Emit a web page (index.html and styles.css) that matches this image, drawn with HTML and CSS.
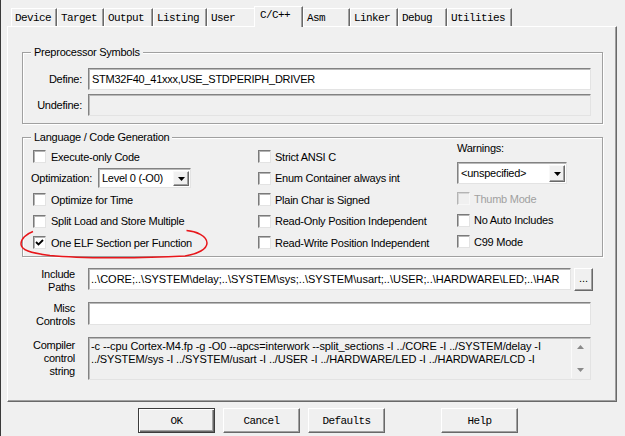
FILE: index.html
```html
<!DOCTYPE html>
<html>
<head>
<meta charset="utf-8">
<link rel="stylesheet" href="styles.css">
</head>
<body>
<div class="window">
  <div class="tabs">
    <div class="tab w-device">Device</div>
    <div class="tab w-target">Target</div>
    <div class="tab w-output">Output</div>
    <div class="tab w-listing">Listing</div>
    <div class="tab w-user">User</div>
    <div class="tab tab--active w-cpp">C/C++</div>
    <div class="tab w-asm">Asm</div>
    <div class="tab w-linker">Linker</div>
    <div class="tab w-debug">Debug</div>
    <div class="tab w-util">Utilities</div>
  </div>
  <div class="panel">
    <div class="group group--pre">
      <span class="legend">Preprocessor Symbols</span>
      <div class="sym-grid">
        <div class="flabel">Define:</div>
        <div class="input">STM32F40_41xxx,USE_STDPERIPH_DRIVER</div>
        <div class="flabel">Undefine:</div>
        <div class="input input--disabled"></div>
      </div>
    </div>
    <div class="group group--lang">
      <span class="legend">Language / Code Generation</span>
      <div class="lang">
        <div class="col col1">
          <div class="row"><span class="cb"></span>Execute-only Code</div>
          <div class="row"><span class="opt-label">Optimization:</span>
            <div class="combo combo--opt"><span class="combo-text">Level 0 (-O0)</span><span class="combo-btn"><svg width="7" height="4" viewBox="0 0 7 4"><path d="M0 0H7L3.5 4Z" fill="#000"/></svg></span></div>
          </div>
          <div class="row"><span class="cb"></span>Optimize for Time</div>
          <div class="row"><span class="cb"></span>Split Load and Store Multiple</div>
          <div class="row"><span class="cb cb--checked"><svg width="11" height="11" viewBox="0 0 11 11"><path d="M2 5L4.5 7.5L9 3" fill="none" stroke="#000" stroke-width="1.8"/></svg></span>One ELF Section per Function</div>
        </div>
        <div class="col col2">
          <div class="row"><span class="cb"></span>Strict ANSI C</div>
          <div class="row"><span class="cb"></span>Enum Container always int</div>
          <div class="row"><span class="cb"></span>Plain Char is Signed</div>
          <div class="row"><span class="cb"></span>Read-Only Position Independent</div>
          <div class="row"><span class="cb"></span>Read-Write Position Independent</div>
        </div>
        <div class="col col3">
          <div class="warn-label">Warnings:</div>
          <div class="combo combo--warn"><span class="combo-text">&lt;unspecified&gt;</span><span class="combo-btn"><svg width="7" height="4" viewBox="0 0 7 4"><path d="M0 0H7L3.5 4Z" fill="#000"/></svg></span></div>
          <div class="col3-rows">
            <div class="row row--disabled"><span class="cb cb--disabled"></span>Thumb Mode</div>
            <div class="row"><span class="cb"></span>No Auto Includes</div>
            <div class="row"><span class="cb"></span>C99 Mode</div>
          </div>
        </div>
      </div>
    </div>
    <div class="opts">
      <div class="opt-row">
        <div class="olabel"><span>Include</span><span>Paths</span></div>
        <div class="field-line">
          <div class="input input--include">..\CORE;..\SYSTEM\delay;..\SYSTEM\sys;..\SYSTEM\usart;..\USER;..\HARDWARE\LED;..\HAR</div>
          <div class="browse">...</div>
        </div>
      </div>
      <div class="opt-row opt-row--misc">
        <div class="olabel"><span>Misc</span><span>Controls</span></div>
        <div class="input input--wide"></div>
      </div>
      <div class="opt-row opt-row--comp">
        <div class="olabel"><span>Compiler</span><span>control</span><span>string</span></div>
        <div class="textarea">
          <div class="ta-text">-c --cpu Cortex-M4.fp -g -O0 --apcs=interwork --split_sections -I ../CORE -I ../SYSTEM/delay -I<br>../SYSTEM/sys -I ../SYSTEM/usart -I ../USER -I ../HARDWARE/LED -I ../HARDWARE/LCD -I</div>
          <div class="scrollbar">
            <svg width="7" height="4" viewBox="0 0 7 4"><path d="M0 4H7L3.5 0Z" fill="#8a8a8a"/></svg>
            <svg width="7" height="4" viewBox="0 0 7 4"><path d="M0 0H7L3.5 4Z" fill="#8a8a8a"/></svg>
          </div>
        </div>
      </div>
    </div>
  </div>
  <div class="buttons">
    <div class="btn btn--default">OK</div>
    <div class="btn">Cancel</div>
    <div class="btn">Defaults</div>
    <div class="btn btn--help">Help</div>
  </div>
  <svg class="annot" width="625" height="436" viewBox="0 0 625 436">
    <path d="M33 231.5 C26 234, 21 239, 21 244 C21 250, 30 253, 50 255.5 C80 258.5, 140 258.5, 185 256 C198 254, 207 249, 207 243 C207 236, 196 231, 186.5 230.5" fill="none" stroke="#e8161b" stroke-width="1.5"/>
  </svg>
</div>
</body>
</html>
```

FILE: styles.css
```css
* { box-sizing: border-box; }
html, body { margin: 0; padding: 0; background: #f0f0f0; }
body {
  font-family: "Liberation Sans", Arial, sans-serif;
  font-size: 11px;
  letter-spacing: -0.25px;
  color: #000;
  overflow: hidden;
}
.window {
  position: relative;
  width: 625px;
  height: 436px;
  border-left: 1px solid #3a3a3a;
}

/* Tabs */
.tabs {
  display: flex;
  align-items: flex-end;
  height: 26px;
  padding-left: 10px;
  font-family: "Liberation Mono", "DejaVu Sans Mono", monospace;
  font-size: 11px;
  letter-spacing: -0.6px;
}
.tab {
  height: 18px;
  border-top: 1px solid #fff;
  border-left: 1px solid #fff;
  border-right: 1px solid #696969;
  box-shadow: inset -1px 0 0 #a0a0a0;
  padding: 2px 0 0 3px;
  line-height: 14px;
  white-space: nowrap;
}
.tab--active {
  height: 21px;
  margin-bottom: -1px;
  position: relative;
  z-index: 1;
  background: #f0f0f0;
  padding: 1px 0 0 5px;
}
.w-device { width: 46px; }
.w-target { width: 47px; }
.w-output { width: 49px; }
.w-listing { width: 54px; }
.w-user { width: 47px; border-right: none; box-shadow: none; }
.w-cpp { width: 49px; }
.w-asm { width: 47px; }
.w-linker { width: 48px; }
.w-debug { width: 49px; }
.w-util { width: 65px; }

/* Panel */
.panel {
  margin-left: 6px;
  width: 610px;
  height: 376px;
  border: 1px solid;
  border-color: #fff #696969 #696969 #fff;
  box-shadow: inset -1px -1px 0 #a0a0a0;
  padding-left: 14px;
}
.group {
  position: relative;
  width: 581px;
  border: 1px solid #a0a0a0;
  box-shadow: inset 1px 1px 0 #fff, 1px 1px 0 #fff;
}
.legend {
  position: absolute;
  top: -8px;
  left: 8px;
  padding: 0 3px;
  background: #f0f0f0;
  line-height: 14px;
  white-space: nowrap;
}
.group--pre {
  margin-top: 25px;
  height: 72px;
  padding-top: 15px;
}
.sym-grid {
  display: grid;
  grid-template-columns: 59px 503px;
  column-gap: 6px;
  row-gap: 4px;
}
.flabel {
  text-align: right;
  align-self: center;
}
.input {
  height: 22px;
  background: #fff;
  border: 1px solid;
  border-color: #828282 #e3e3e3 #e3e3e3 #828282;
  box-shadow: inset 1px 1px 0 #b9b9b9;
  padding: 0 0 0 3px;
  line-height: 20px;
  white-space: nowrap;
  overflow: hidden;
}
.input--disabled { background: #f0f0f0; }

/* Language group */
.group--lang {
  margin-top: 13px;
  height: 120px;
}
.lang {
  display: grid;
  grid-template-columns: 227px 199px 1fr;
  padding: 8px 0 0 8px;
}
.row {
  height: 21.5px;
  display: flex;
  align-items: center;
  white-space: nowrap;
}
.cb {
  flex: none;
  width: 13px;
  height: 13px;
  margin-right: 4px;
  background: #fff;
  border: 1px solid;
  border-color: #7a7a7a #e3e3e3 #e3e3e3 #7a7a7a;
  box-shadow: inset 1px 1px 0 #b4b4b4;
  display: flex;
  align-items: center;
  justify-content: center;
}
.col1 .cb { margin: 0 5px 0 2px; }
.cb--disabled {
  background: #f0f0f0;
  border-color: #b4b4b4 #f7f7f7 #f7f7f7 #b4b4b4;
  box-shadow: inset 1px 1px 0 #d6d6d6;
}
.row--disabled { color: #a0a0a0; }
.opt-label { width: 67px; }
.combo {
  display: flex;
  align-items: center;
  background: #fff;
  border: 1px solid;
  border-color: #828282 #e3e3e3 #e3e3e3 #828282;
  box-shadow: inset 1px 1px 0 #b9b9b9;
  padding-left: 3px;
  white-space: nowrap;
}
.combo--opt { width: 93px; height: 20px; }
.combo--warn { width: 110px; height: 22px; margin-top: 7px; }
.combo-text { flex: 1; }
.combo-btn {
  width: 16px;
  height: calc(100% - 3px);
  margin: 1px 1px 0 0;
  background: #f0f0f0;
  border: 1px solid;
  border-color: #f8f8f8 #696969 #696969 #f8f8f8;
  box-shadow: inset -1px -1px 0 #a0a0a0;
  display: flex;
  align-items: center;
  justify-content: center;
}
.warn-label {
  margin-top: -4px;
  line-height: 13px;
}
.col3-rows { margin-top: 4px; }

/* Option rows */
.opts {
  margin-top: 11px;
  display: flex;
  flex-direction: column;
}
.opt-row {
  display: grid;
  grid-template-columns: 53px auto;
  column-gap: 13px;
}
.opt-row--misc { margin-top: 8px; }
.opt-row--comp { margin-top: 9px; }
.olabel {
  display: flex;
  flex-direction: column;
  justify-content: center;
  align-items: flex-end;
  line-height: 13px;
  text-align: right;
}
.field-line {
  display: flex;
  align-items: flex-start;
}
.input--include { width: 483px; letter-spacing: 0; padding-left: 2px; }
.input--wide { width: 503px; height: 23px; }
.browse {
  width: 19px;
  height: 23px;
  margin-left: 3px;
  border: 1px solid;
  border-color: #fff #696969 #696969 #fff;
  box-shadow: inset -1px -1px 0 #a0a0a0;
  text-align: center;
  line-height: 18px;
  letter-spacing: 0;
}
.textarea {
  width: 503px;
  height: 43px;
  display: flex;
  border: 1px solid;
  border-color: #828282 #e3e3e3 #e3e3e3 #828282;
  box-shadow: inset 1px 1px 0 #b9b9b9;
  background: #f0f0f0;
}
.ta-text {
  flex: 1;
  padding: 2px 0 0 2px;
  line-height: 13px;
  white-space: nowrap;
  overflow: hidden;
  letter-spacing: -0.1px;
}
.scrollbar {
  width: 18px;
  flex: none;
  margin: 1px 1px 1px 0;
  display: flex;
  flex-direction: column;
  align-items: center;
  justify-content: space-between;
  padding: 6px 0 6px;
  border-left: 1px solid #fafafa;
}

/* Buttons */
.buttons {
  display: flex;
  gap: 8px;
  margin-top: 6px;
  padding-left: 137px;
}
.btn {
  width: 77px;
  height: 25px;
  border: 1px solid;
  border-color: #fff #696969 #696969 #fff;
  box-shadow: inset -1px -1px 0 #a0a0a0;
  display: flex;
  align-items: center;
  justify-content: center;
  font-family: "Liberation Mono", "DejaVu Sans Mono", monospace;
  font-size: 11px;
  letter-spacing: -0.6px;
}
.btn--default {
  border: 1px solid #3c3c3c;
  box-shadow: inset 1px 1px 0 #fff, inset -1px -1px 0 #696969, inset -2px -2px 0 #a0a0a0;
}
.btn--help { margin-left: 48px; }

/* Annotation */
.annot {
  position: absolute;
  left: -1px;
  top: 0;
  pointer-events: none;
}
```
